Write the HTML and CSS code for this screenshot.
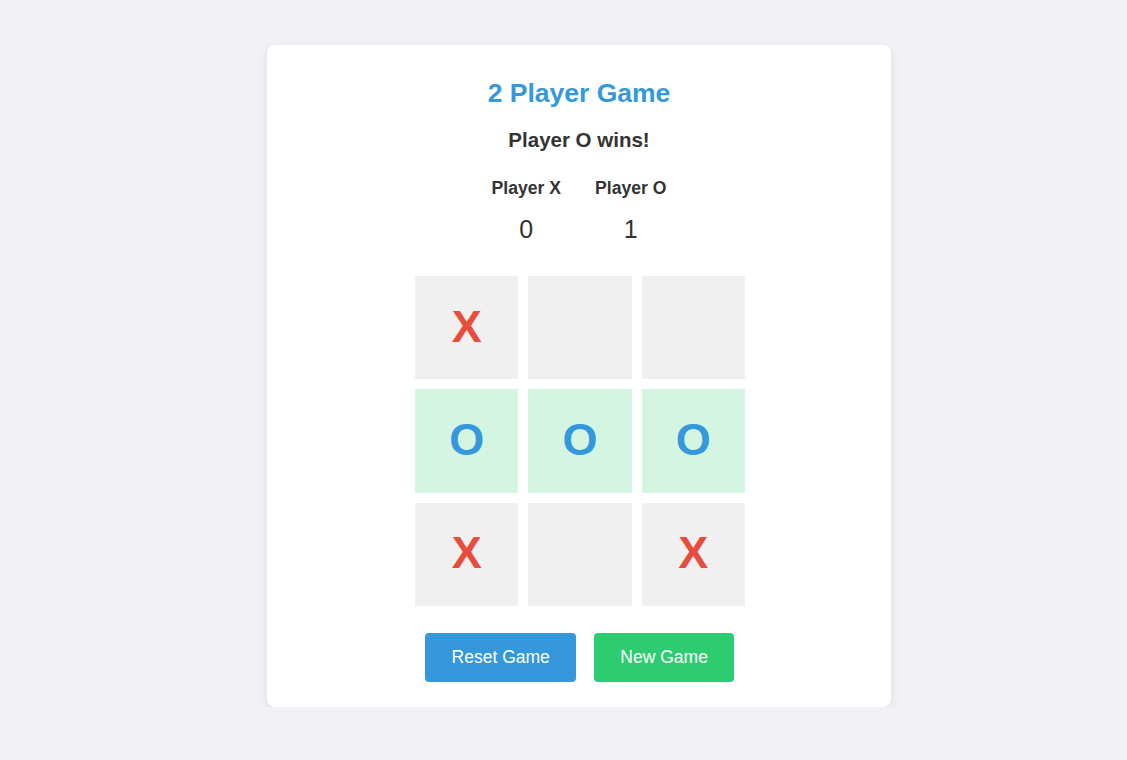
FILE: index.html
```html
<!DOCTYPE html>
<html lang="en">
<head>
<meta charset="utf-8">
<title>2 Player Game</title>
<link rel="stylesheet" href="styles.css">
</head>
<body>
<div class="page">
  <div class="card">
    <h1 class="title">2 Player Game</h1>
    <div class="status">Player O wins!</div>
    <div class="scores">
      <div class="score-col">
        <div class="score-label">Player X</div>
        <div class="score-value">0</div>
      </div>
      <div class="score-col">
        <div class="score-label">Player O</div>
        <div class="score-value">1</div>
      </div>
    </div>
    <div class="board">
      <div class="cell x">X</div>
      <div class="cell"></div>
      <div class="cell"></div>
      <div class="cell o win">O</div>
      <div class="cell o win">O</div>
      <div class="cell o win">O</div>
      <div class="cell x">X</div>
      <div class="cell"></div>
      <div class="cell x">X</div>
    </div>
    <div class="actions">
      <button class="btn btn-reset">Reset Game</button>
      <button class="btn btn-new">New Game</button>
    </div>
  </div>
</div>
</body>
</html>
```

FILE: styles.css
```css
html, body {
  margin: 0;
  padding: 0;
}
body {
  background: #f2f2f6;
  font-family: "Liberation Sans", Arial, sans-serif;
  color: #333;
}
.page {
  display: flex;
  justify-content: center;
  padding: 45px 0 0 31px;
}
.card {
  width: 624px;
  box-sizing: border-box;
  background: #fff;
  border-radius: 8px;
  box-shadow: 0 3px 12px rgba(0, 0, 0, 0.09);
  padding: 32px 30px 25px;
  display: flex;
  flex-direction: column;
  align-items: center;
}
.title {
  margin: 0 0 19px;
  font-size: 26.5px;
  line-height: 32px;
  font-weight: bold;
  color: #3498db;
}
.status {
  margin: 0 0 25px;
  font-size: 20.5px;
  line-height: 24px;
  font-weight: bold;
  color: #333;
}
.scores {
  display: flex;
  gap: 34px;
  margin-bottom: 32px;
}
.score-col {
  display: flex;
  flex-direction: column;
  align-items: center;
}
.score-label {
  font-size: 17.6px;
  line-height: 22px;
  font-weight: bold;
  margin-bottom: 15px;
}
.score-value {
  font-size: 25px;
  line-height: 30px;
}
.board {
  display: grid;
  grid-template-columns: repeat(3, 1fr);
  grid-template-rows: repeat(3, 1fr);
  gap: 10px;
  width: 330px;
  height: 330px;
  margin: 0 0 27px 2px;
}
.cell {
  background: #f0f0f0;
  display: flex;
  align-items: center;
  justify-content: center;
  font-size: 45px;
  font-weight: bold;
  line-height: 1;
  padding-bottom: 3px;
  box-sizing: border-box;
}
.cell.win {
  background: #d5f5e3;
}
.cell.x {
  color: #e74c3c;
}
.cell.o {
  color: #3498db;
}
.actions {
  display: flex;
  gap: 18px;
  margin-left: 1px;
}
.btn {
  height: 49px;
  border: none;
  border-radius: 4px;
  color: #fff;
  font-family: "Liberation Sans", Arial, sans-serif;
  font-size: 17.5px;
  padding: 0 27px;
  cursor: pointer;
}
.btn-reset {
  background: #3498db;
  padding: 0 26.5px;
}
.btn-new {
  background: #2ecc71;
  padding: 0 26px;
}
```
